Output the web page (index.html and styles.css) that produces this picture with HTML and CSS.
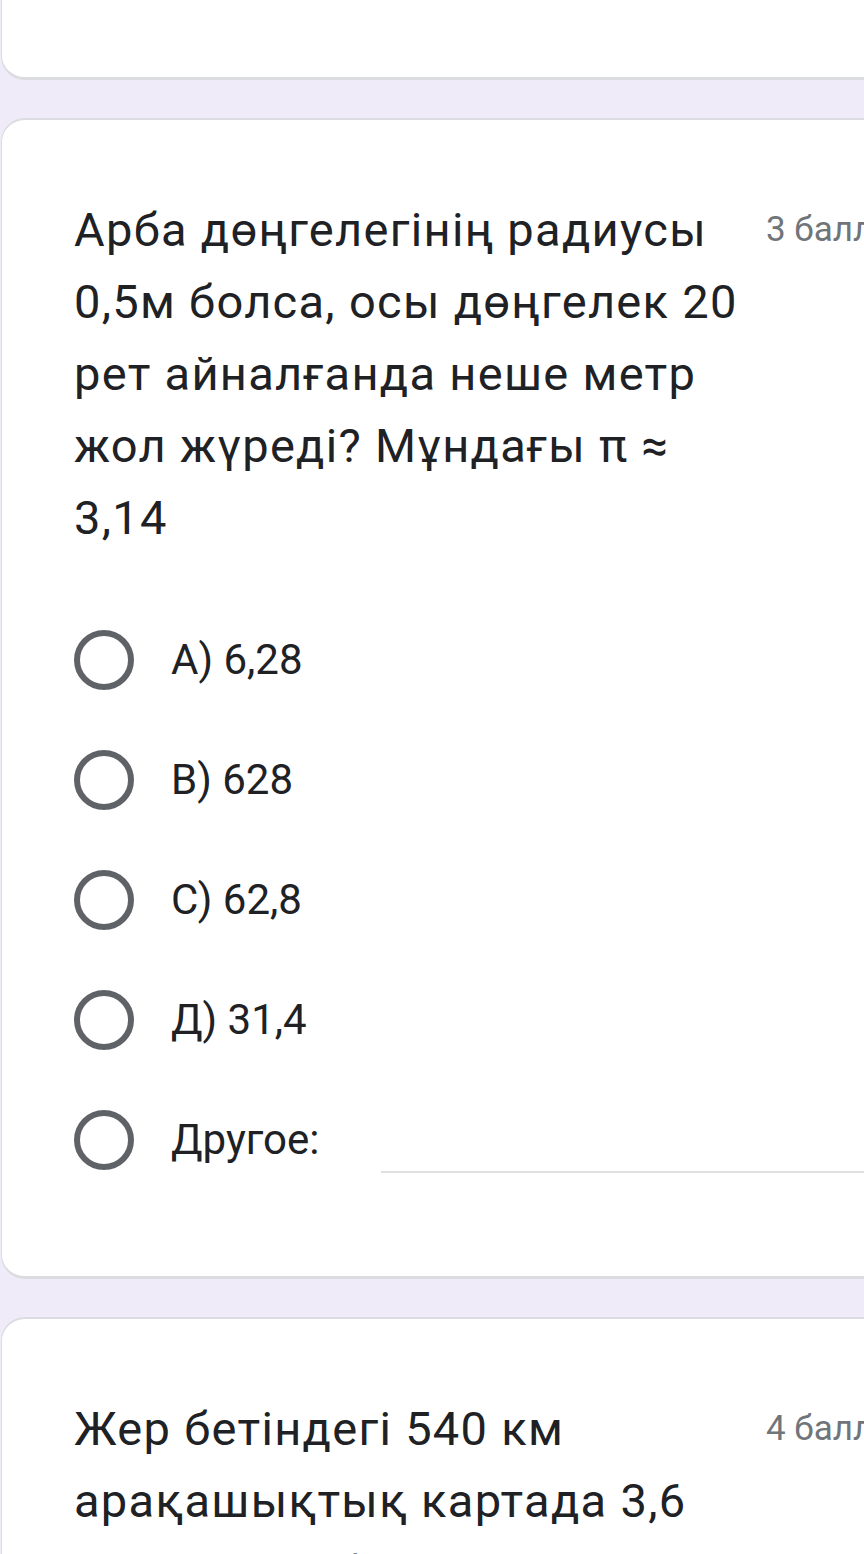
FILE: index.html
```html
<!DOCTYPE html>
<html lang="ru">
<head>
<meta charset="utf-8">
<title>Form</title>
<link rel="stylesheet" href="styles.css">
</head>
<body>
<div class="page">
  <div class="card card-top"></div>

  <div class="card">
    <div class="q-head">
      <div class="q-title">Арба дөңгелегінің радиусы 0,5м болса, осы дөңгелек 20 рет айналғанда неше метр жол жүреді? Мұндағы π ≈ 3,14</div>
      <div class="q-points">3 балла</div>
    </div>
    <div class="options">
      <div class="option"><span class="radio"></span><span class="opt-label">A) 6,28</span></div>
      <div class="option"><span class="radio"></span><span class="opt-label">B) 628</span></div>
      <div class="option"><span class="radio"></span><span class="opt-label">C) 62,8</span></div>
      <div class="option"><span class="radio"></span><span class="opt-label">Д) 31,4</span></div>
      <div class="option"><span class="radio"></span><span class="opt-label">Другое:</span><span class="other-input"></span></div>
    </div>
  </div>

  <div class="card">
    <div class="q-head">
      <div class="q-title">Жер бетіндегі 540 км арақашықтық картада 3,6 сантиметр болса, картаның масштабы қандай?</div>
      <div class="q-points">4 балла</div>
    </div>
  </div>
</div>
</body>
</html>
```

FILE: styles.css
```css
html, body {
  margin: 0;
  padding: 0;
  background: #f0ebf8;
  overflow: hidden;
}

.page {
  width: 864px;
  height: 1554px;
  overflow: hidden;
}

.card {
  box-sizing: border-box;
  width: 1000px;
  margin-left: 1px;
  margin-bottom: 38px;
  background: #fff;
  border: 1px solid #dadce0;
  border-top-width: 2px;
  border-bottom-width: 3px;
  border-radius: 24px 0 0 24px;
  padding: 74px 72px 76px 72px;
}

.card-top {
  height: 80px;
  padding: 0;
  border-top: none;
  border-radius: 0 0 0 24px;
}

.q-head {
  display: flex;
  align-items: flex-start;
  gap: 20px;
  margin-bottom: 46px;
}

.q-title {
  flex: 0 0 672px;
  font-family: Roboto, "Noto Sans", sans-serif;
  font-size: 47px;
  line-height: 72px;
  color: #202124;
  letter-spacing: 1.3px;
}

.q-points {
  font-family: Roboto, "Noto Sans", sans-serif;
  font-size: 35px;
  line-height: 72px;
  color: #70757a;
  white-space: nowrap;
}

.options {
  display: flex;
  flex-direction: column;
}

.option {
  display: flex;
  align-items: center;
  height: 120px;
}

.radio {
  box-sizing: border-box;
  flex: 0 0 60px;
  width: 60px;
  height: 60px;
  border: 6px solid #5f6368;
  border-radius: 50%;
}

.opt-label {
  margin-left: 37px;
  font-family: Roboto, "Noto Sans", sans-serif;
  font-size: 42px;
  line-height: 60px;
  color: #202124;
}

.other-input {
  flex: 1;
  align-self: flex-end;
  margin-left: 62px;
  margin-bottom: 27px;
  height: 0;
  border-bottom: 2px solid #e0e0e0;
}
```
